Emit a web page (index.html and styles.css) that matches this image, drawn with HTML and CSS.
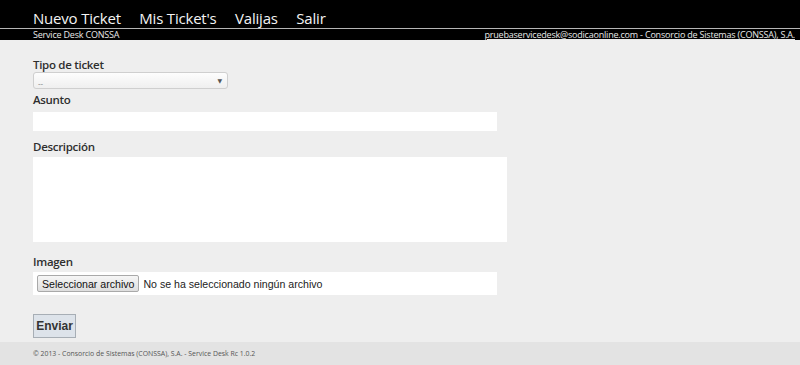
FILE: index.html
```html
<!DOCTYPE html>
<html lang="es">
<head>
<meta charset="utf-8">
<title>Service Desk CONSSA</title>
<link rel="stylesheet" href="styles.css">
</head>
<body>
<header class="topbar">
  <nav class="nav">
    <a href="#">Nuevo Ticket</a>
    <a href="#">Mis Ticket's</a>
    <a href="#">Valijas</a>
    <a href="#">Salir</a>
  </nav>
</header>
<div class="subbar">
  <span>Service Desk CONSSA</span>
  <a href="#">pruebaservicedesk@sodicaonline.com - Consorcio de Sistemas (CONSSA), S.A.</a>
</div>
<main class="main">
  <form class="form">
    <label class="lbl lbl-tipo">Tipo de ticket</label>
    <div class="select"><span class="select-val">--</span><span class="select-arrow">▼</span></div>
    <label class="lbl lbl-asunto">Asunto</label>
    <div class="input"></div>
    <label class="lbl lbl-desc">Descripción</label>
    <div class="textarea"></div>
    <label class="lbl lbl-img">Imagen</label>
    <div class="filebox"><span class="filebtn">Seleccionar archivo</span><span class="filetext">No se ha seleccionado ningún archivo</span></div>
    <div class="actions"><button type="button" class="btn">Enviar</button></div>
  </form>
</main>
<footer class="footer">© 2013 - Consorcio de Sistemas (CONSSA), S.A. - Service Desk Rc 1.0.2</footer>
</body>
</html>
```

FILE: styles.css
```css
html, body {
  margin: 0;
  padding: 0;
}
body {
  background: #eeeeee;
  font-family: "Open Sans", "Noto Sans", sans-serif;
  color: #333;
  width: 800px;
  height: 365px;
  overflow: hidden;
  display: flex;
  flex-direction: column;
}
.topbar {
  background: #000;
  height: 29px;
  box-sizing: border-box;
  padding: 9px 0 0 33px;
  border-bottom: 1px solid #b5b5b5;
}
.nav {
  display: flex;
  gap: 18.5px;
}
.nav a {
  color: #f4f4f4;
  text-decoration: none;
  font-size: 15px;
  line-height: 19px;
  letter-spacing: -0.2px;
}
.subbar {
  background: #000;
  height: 11px;
  display: flex;
  justify-content: space-between;
  align-items: center;
  padding: 0 5px 0 33px;
  font-size: 9px;
  line-height: 11px;
  color: #e8e8e8;
  letter-spacing: -0.2px;
}
.subbar a {
  color: #e8e8e8;
  text-decoration: underline;
}
.main {
  flex: 1;
  padding: 17px 0 0 33px;
}
.form {
  display: flex;
  flex-direction: column;
  align-items: flex-start;
}
.lbl {
  display: block;
  font-size: 11.5px;
  font-weight: 600;
  line-height: 15px;
  color: #2e2e2e;
  letter-spacing: -0.3px;
}
.select {
  width: 195px;
  height: 17px;
  box-sizing: border-box;
  border: 1px solid #cfcfcf;
  border-radius: 3px;
  background: linear-gradient(#fdfdfd, #efefef);
  display: flex;
  align-items: center;
  justify-content: space-between;
  padding: 0 5px 0 4px;
  margin-bottom: 3px;
}
.select-val {
  font-size: 8px;
  color: #777;
  line-height: 8px;
  padding-top: 4px;
}
.select-arrow {
  font-size: 6px;
  color: #555;
  font-family: "DejaVu Sans", sans-serif;
}
.lbl-asunto { margin-bottom: 5px; }
.input {
  width: 464px;
  height: 19px;
  background: #fff;
  margin-bottom: 8px;
}
.lbl-desc { margin-bottom: 3px; }
.textarea {
  width: 474px;
  height: 85px;
  background: #fff;
  margin-bottom: 12px;
}
.lbl-img { margin-bottom: 3px; }
.filebox {
  width: 464px;
  height: 23px;
  background: #fff;
  box-sizing: border-box;
  display: flex;
  align-items: center;
  padding-left: 4px;
  font-family: "Liberation Sans", Arial, sans-serif;
  font-size: 10.6px;
  color: #222;
  margin-bottom: 19px;
}
.filebtn {
  display: inline-block;
  height: 17px;
  line-height: 16px;
  box-sizing: border-box;
  border: 1px solid #a9a9a9;
  border-radius: 2px;
  background: linear-gradient(#f6f6f6, #dedede);
  padding: 0 4px;
  margin-right: 4px;
  color: #111;
}
.actions {
  margin-bottom: 4px;
}
.btn {
  display: block;
  width: 43px;
  height: 24px;
  box-sizing: border-box;
  border: 1px solid #a7aeb5;
  background: #dde3ea;
  font-family: "Liberation Sans", Arial, sans-serif;
  font-weight: bold;
  font-size: 12px;
  color: #333;
  padding: 0;
  margin: 0;
}
.footer {
  height: 23px;
  background: #e3e3e3;
  padding-left: 33px;
  font-size: 6.9px;
  line-height: 23px;
  color: #555;
}
```
